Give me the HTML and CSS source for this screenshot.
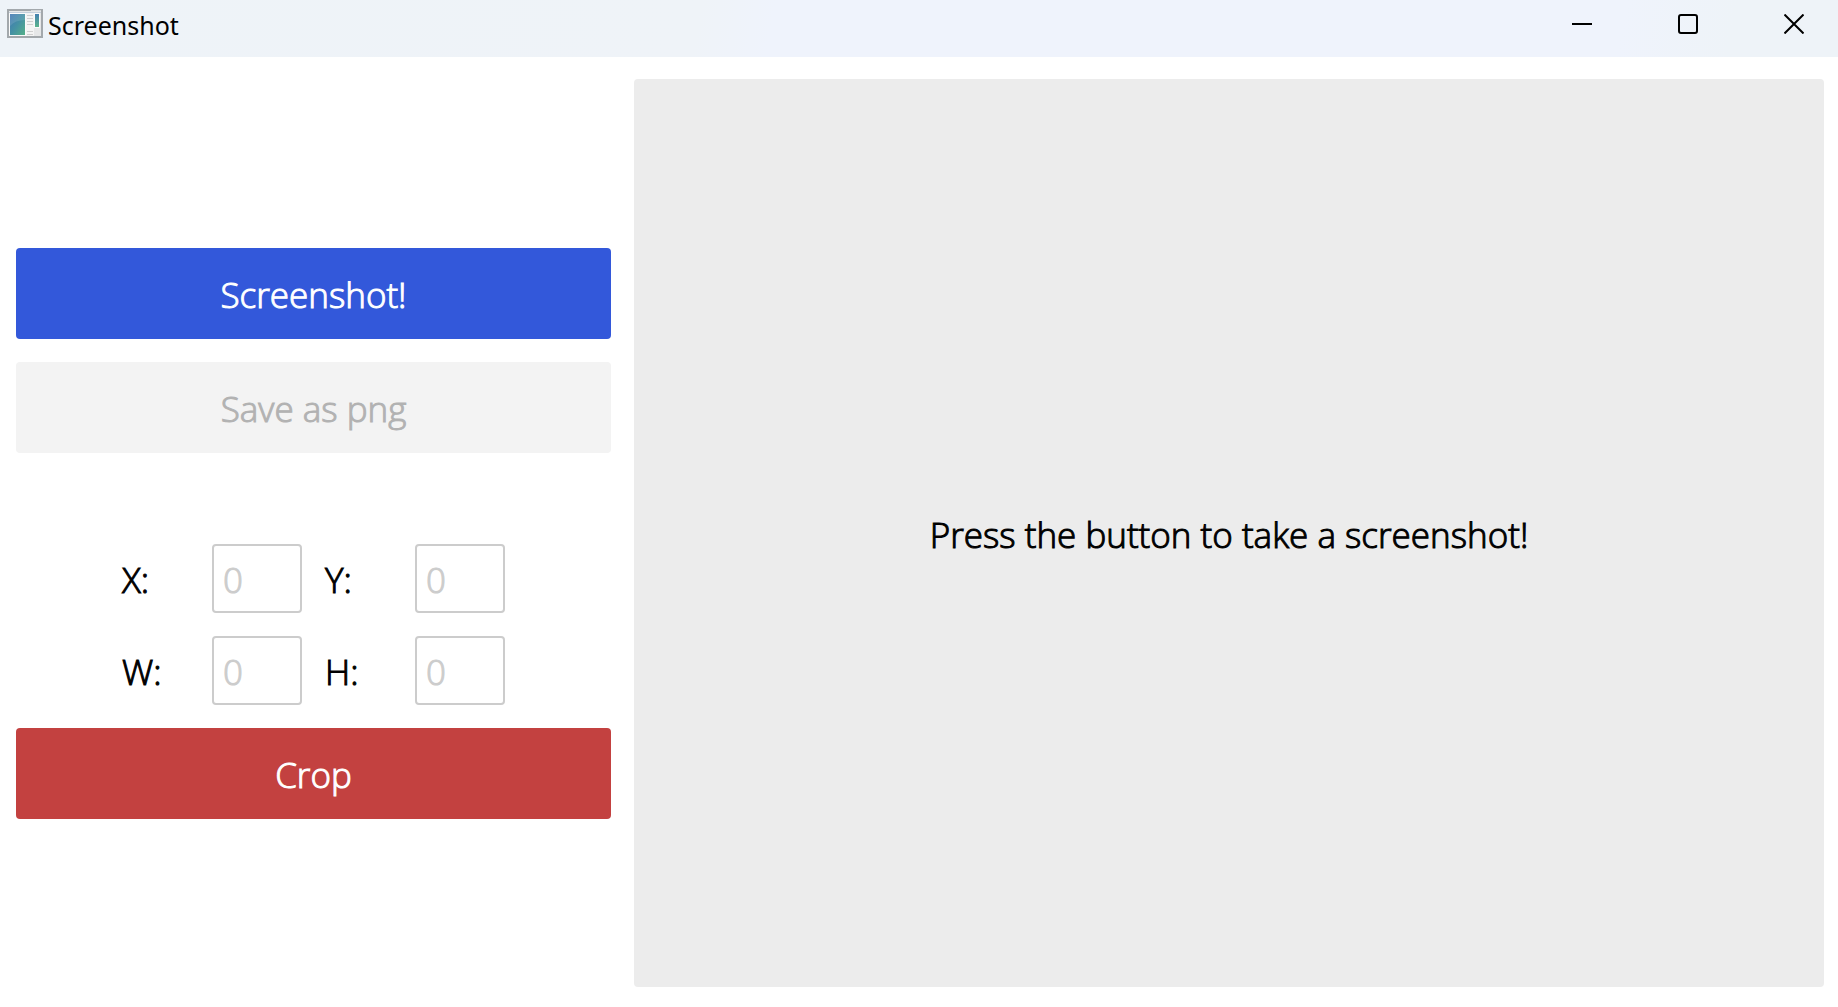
FILE: index.html
```html
<!DOCTYPE html>
<html lang="en">
<head>
  <meta charset="utf-8">
  <title>Screenshot</title>
  <link rel="stylesheet" href="styles.css">
</head>
<body>
  <header class="titlebar">
    <svg class="app-icon" viewBox="0 0 36 30" aria-hidden="true">
      <defs>
        <linearGradient id="pane" x1="0" y1="0" x2="1" y2="1">
          <stop offset="0" stop-color="#3f76b4"/>
          <stop offset="0.5" stop-color="#4591a4"/>
          <stop offset="1" stop-color="#55b088"/>
        </linearGradient>
        <linearGradient id="strip" x1="0" y1="0" x2="0" y2="1">
          <stop offset="0" stop-color="#4480b0"/>
          <stop offset="1" stop-color="#5cb48c"/>
        </linearGradient>
      </defs>
      <rect x="1" y="1" width="34" height="27" fill="#e6e7e8" stroke="#a3a8ac" stroke-width="2"/>
      <path d="M24 1.500H34" stroke="#d3d7da" stroke-width="1"/>
      <path d="M2 3.500H34" stroke="#c5d0dc" stroke-width="1"/>
      <rect x="2" y="4" width="17" height="23" fill="#fafafa"/>
      <rect x="3" y="5" width="15" height="21" fill="url(#pane)"/>
      <path d="M3 5H18V11Q8 11 3 17Z" fill="#fff" opacity="0.12"/>
      <path d="M19 4H27V27H19Z" fill="#f4f4f4"/>
      <path d="M20 6.500H26M20 9.500H26M20 12.500H26M20 15.500H26M20 22.500H26M20 25.500H26" stroke="#cfcfcf"/>
      <rect x="27" y="4" width="6" height="15" fill="#fafafa"/>
      <rect x="28" y="5" width="4" height="13" fill="url(#strip)"/>
    </svg>
    <h1 class="window-title">Screenshot</h1>
    <div class="window-controls">
      <button class="window-button" type="button" aria-label="Minimize">
        <svg viewBox="0 0 20 20" aria-hidden="true"><path d="M0 10H20"/></svg>
      </button>
      <button class="window-button" type="button" aria-label="Maximize">
        <svg viewBox="0 0 20 20" aria-hidden="true"><rect x="1" y="1" width="18" height="18" rx="2"/></svg>
      </button>
      <button class="window-button" type="button" aria-label="Close">
        <svg viewBox="0 0 20 20" aria-hidden="true"><path d="M0.500 0.500L19.500 19.500M19.500 0.500L0.500 19.500"/></svg>
      </button>
    </div>
  </header>
  <main class="content">
    <form class="sidebar">
      <button class="action action-primary" type="button">Screenshot!</button>
      <button class="action action-save" type="button" disabled>Save as png</button>
      <div class="crop-fields">
        <label for="crop-x">X:</label>
        <input id="crop-x" type="text" inputmode="numeric" placeholder="0">
        <label for="crop-y">Y:</label>
        <input id="crop-y" type="text" inputmode="numeric" placeholder="0">
        <label for="crop-w">W:</label>
        <input id="crop-w" type="text" inputmode="numeric" placeholder="0">
        <label for="crop-h">H:</label>
        <input id="crop-h" type="text" inputmode="numeric" placeholder="0">
      </div>
      <button class="action action-danger" type="button">Crop</button>
    </form>
    <section class="preview">
      <p class="preview-hint">Press the button to take a screenshot!</p>
    </section>
  </main>
</body>
</html>
```
FILE: styles.css
```css
* {
  box-sizing: border-box;
}

body {
  margin: 0;
  min-height: 100vh;
  display: flex;
  flex-direction: column;
  background: #fff;
  color: #000;
  font-family: "Open Sans", "Noto Sans", sans-serif;
  font-size: 35px;
  font-weight: 300;
  line-height: 48px;
}

button,
input {
  font: inherit;
}

.titlebar {
  display: flex;
  align-items: flex-start;
  height: 57px;
  background: linear-gradient(100deg, #eef3f8 0%, #eff3f8 38%, #eff3fc 42%, #eff3fc 88%, #eef3f8 94%);
}

.app-icon {
  width: 36px;
  height: 30px;
  margin: 9px 5px 0 7px;
}

.window-title {
  margin: 9px 0 0;
  font-family: "Noto Sans", "Open Sans", sans-serif;
  font-size: 25px;
  font-weight: 400;
  line-height: 32px;
}

.window-controls {
  display: flex;
  margin-left: auto;
}

.window-button {
  display: grid;
  place-items: center;
  width: 106px;
  height: 48px;
  padding: 0;
  border: 0;
  background: transparent;
}

.window-button:last-child {
  width: 88px;
  margin-left: 9px;
}

.window-button svg {
  width: 20px;
  height: 20px;
  fill: none;
  stroke: #000;
  stroke-width: 2;
}

.content {
  flex: 1;
  display: grid;
  grid-template-columns: minmax(0, 1fr) minmax(0, 2fr);
  gap: 23px;
  padding: 22px 14px 20px 16px;
}

.sidebar {
  display: flex;
  flex-direction: column;
  justify-content: center;
  gap: 23px;
}

/* The light face is a little thin at this size; an outline firms it up. */
.action,
.crop-fields,
.preview-hint {
  -webkit-text-stroke: 1px;
}

.action {
  height: 91px;
  padding: 4px 16px 0;
  border: 0;
  border-radius: 4px;
  color: #fff;
}

.action-primary {
  background: #3358da;
}

.action-save {
  background: #f3f3f3;
  color: #b2b2b2;
}

.action-danger {
  background: #c34140;
}

.crop-fields {
  display: grid;
  grid-template-columns: 67px 90px 67px 90px;
  justify-content: center;
  align-items: center;
  gap: 23px;
  margin-top: 68px;
}

.crop-fields label {
  padding-top: 4px;
}

.crop-fields input {
  width: 100%;
  height: 69px;
  padding: 2px 9px 0;
  border: 2px solid #ccc;
  border-radius: 4px;
  background: #fff;
}

.crop-fields input::placeholder {
  color: #ccc;
  opacity: 1;
}

.preview {
  display: grid;
  place-items: center;
  border-radius: 4px;
  background: #ececec;
}

.preview-hint {
  margin: 0;
  padding-top: 4px;
}
```
